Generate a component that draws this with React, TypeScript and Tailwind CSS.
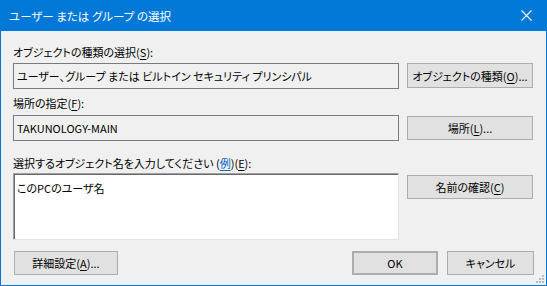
import React from "react";

const U = ({ children }: { children: React.ReactNode }) => (
  <span className="underline underline-offset-2">{children}</span>
);

const Btn = ({ className, children }: { className: string; children: React.ReactNode }) => (
  <div
    className={
      "flex items-center justify-center whitespace-nowrap bg-[#e1e1e1] border border-[#adadad] text-[11px] leading-[14px] text-black " +
      className
    }
  >
    {children}
  </div>
);

const App = () => {
  return (
    <div className="w-[547px] h-[286px] bg-[#0078d7] px-[1px] pb-[1px] flex flex-col font-['Noto_Sans_CJK_JP',sans-serif] [font-feature-settings:'palt'] overflow-hidden">
      {/* Title bar */}
      <div className="h-[31px] flex items-center justify-between pl-[8px] pr-[10px] text-white text-[11.5px] leading-[14px]">
        <span>ユーザー または グループ の選択</span>
        <svg width="11" height="11" viewBox="0 0 11 11" className="mr-[4px]">
          <path d="M0.5 0.5 L10.5 10.5 M10.5 0.5 L0.5 10.5" stroke="white" strokeWidth="1.1" />
        </svg>
      </div>

      {/* Body */}
      <div className="flex-1 bg-[#f0f0f0] relative px-[12px] text-[11px] leading-[14px] text-black whitespace-nowrap">
        <div className="mt-[14px] h-[14px]">
          オブジェクトの種類の選択(<U>S</U>):
        </div>
        <div className="mt-[4px] flex items-start">
          <div className="w-[386px] h-[26px] border border-[#7a7a7a] bg-[#f0f0f0] flex items-center px-[3px]">
            ユーザー、グループ または ビルトイン セキュリティ プリンシパル
          </div>
          <Btn className="ml-[8px] w-[126px] h-[25px]">
            オブジェクトの種類(<U>O</U>)...
          </Btn>
        </div>

        <div className="mt-[7px] h-[14px]">
          場所の指定(<U>F</U>):
        </div>
        <div className="mt-[5px] flex items-start">
          <div className="w-[386px] h-[26px] border border-[#7a7a7a] bg-[#f0f0f0] flex items-center px-[3px]">
            TAKUNOLOGY-MAIN
          </div>
          <Btn className="ml-[8px] mt-[1px] w-[126px] h-[24px]">
            場所(<U>L</U>)...
          </Btn>
        </div>

        <div className="mt-[15px] h-[14px]">
          選択するオブジェクト名を入力してください (<span className="text-[#0066cc] underline underline-offset-2">例</span>)(<U>E</U>):
        </div>
        <div className="mt-[3px] flex items-start">
          <div className="w-[386px] h-[67px] bg-white border border-t-[#a0a0a0] border-l-[#a0a0a0] border-b-[#e3e3e3] border-r-[#e3e3e3] shadow-[inset_1px_1px_0_#696969] pt-[7px] px-[3px]">
            このPCのユーザ名
          </div>
          <Btn className="ml-[8px] mt-[2px] w-[126px] h-[24px]">
            名前の確認(<U>C</U>)
          </Btn>
        </div>

        <div className="mt-[11px] flex items-start">
          <Btn className="ml-[1px] w-[104px] h-[24px]">
            詳細設定(<U>A</U>)...
          </Btn>
          <div className="flex-1" />
          <Btn className="w-[86px] h-[24px] border-2 border-[#0078d7]">OK</Btn>
          <Btn className="ml-[9px] w-[87px] h-[24px] mr-[0px]">キャンセル</Btn>
        </div>

        {/* Resize grip */}
        <svg width="10" height="10" viewBox="0 0 10 10" className="absolute right-[1px] bottom-[1px]">
          <rect x="7" y="1" width="2" height="2" fill="#b8b8b8" />
          <rect x="4" y="4" width="2" height="2" fill="#b8b8b8" />
          <rect x="7" y="4" width="2" height="2" fill="#b8b8b8" />
          <rect x="1" y="7" width="2" height="2" fill="#b8b8b8" />
          <rect x="4" y="7" width="2" height="2" fill="#b8b8b8" />
          <rect x="7" y="7" width="2" height="2" fill="#b8b8b8" />
        </svg>
      </div>
    </div>
  );
};

export default App;
